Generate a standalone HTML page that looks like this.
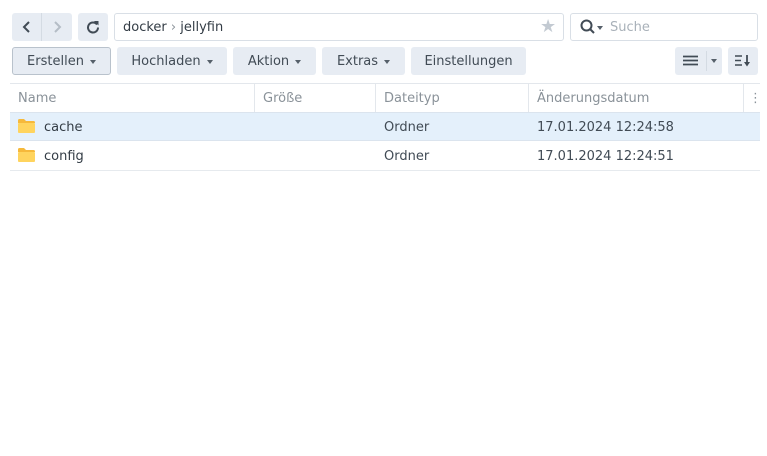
<!DOCTYPE html><html><head><style>
*{box-sizing:border-box;margin:0;padding:0}
body{width:767px;height:456px;background:#fff;font-family:"DejaVu Sans","Liberation Sans",sans-serif;font-size:13px;color:#414b55;position:relative;overflow:hidden}
.a{position:absolute}
.btn{position:absolute;top:47px;height:28px;background:#e7ecf3;border-radius:3px;line-height:29px;text-align:center;color:#414b55}
.car{display:inline-block;width:0;height:0;border-left:3.5px solid transparent;border-right:3.5px solid transparent;border-top:4px solid #56606a;vertical-align:middle;margin-left:6px}
.hd{position:absolute;top:85px;height:28px;line-height:28px;color:#8a9299}
.vl{position:absolute;top:84px;height:28px;width:1px;background:#e3e7ec}
.cell{position:absolute;line-height:28px}
</style></head><body>
<div class="a" style="left:12px;top:13px;width:60px;height:28px;background:#e7ecf3;border-radius:3px"></div>
<div class="a" style="left:41px;top:13px;width:1px;height:28px;background:#d4dbe3"></div>
<svg class="a" style="left:20px;top:19px" width="14" height="16"><path d="M9 3 L4 8 L9 13" stroke="#414b55" stroke-width="2" fill="none"/></svg>
<svg class="a" style="left:50px;top:19px" width="14" height="16"><path d="M5 3 L10 8 L5 13" stroke="#b5bdc6" stroke-width="2" fill="none"/></svg>
<div class="a" style="left:78px;top:13px;width:30px;height:28px;background:#e7ecf3;border-radius:3px"></div>
<svg class="a" style="left:86px;top:20px" width="14" height="14"><path d="M11 4.5 A5 5 0 1 0 12 7.5" stroke="#414b55" stroke-width="2" fill="none"/><path d="M8 1 L12.5 1 L12.5 5.5 Z" fill="#414b55"/></svg>
<div class="a" style="left:114px;top:13px;width:450px;height:28px;border:1px solid #d9dfe6;border-radius:3px"></div>
<div class="a" style="left:123px;top:14px;line-height:28px;color:#333c45">docker <span style="color:#8a9299">›</span> jellyfin</div>
<div class="a" style="left:540px;top:13px;line-height:28px;color:#c3cad2;font-size:18px">★</div>
<div class="a" style="left:570px;top:13px;width:188px;height:28px;border:1px solid #d9dfe6;border-radius:3px"></div>
<svg class="a" style="left:580px;top:19px" width="16" height="16"><circle cx="6.5" cy="6.5" r="5" stroke="#414b55" stroke-width="2" fill="none"/><path d="M10 10 L14 14" stroke="#414b55" stroke-width="2"/></svg>
<div class="a" style="left:597px;top:26px;border-left:3.5px solid transparent;border-right:3.5px solid transparent;border-top:4px solid #56606a"></div>
<div class="a" style="left:610px;top:14px;line-height:28px;color:#a9b1b9">Suche</div>
<div class="btn" style="left:12px;width:99px;border:1px solid #b9c2cc;line-height:27px">Erstellen<span class="car"></span></div>
<div class="btn" style="left:117px;width:110px">Hochladen<span class="car"></span></div>
<div class="btn" style="left:233px;width:83px">Aktion<span class="car"></span></div>
<div class="btn" style="left:322px;width:83px">Extras<span class="car"></span></div>
<div class="btn" style="left:411px;width:115px">Einstellungen</div>
<div class="btn" style="left:675px;width:47px"></div>
<div class="a" style="left:706px;top:51px;width:1px;height:20px;background:#d4dbe3"></div>
<svg class="a" style="left:683px;top:55px" width="16" height="12"><path d="M0 1.5H15M0 5.5H15M0 9.5H15" stroke="#414b55" stroke-width="1.8"/></svg>
<div class="a" style="left:711px;top:59px;border-left:3.5px solid transparent;border-right:3.5px solid transparent;border-top:4px solid #56606a"></div>
<div class="btn" style="left:728px;width:30px"></div>
<svg class="a" style="left:735px;top:54px" width="18" height="14"><path d="M0 2H7M0 6.5H6M0 11H7" stroke="#414b55" stroke-width="1.6"/><path d="M12 1V11" stroke="#414b55" stroke-width="1.8"/><path d="M9 8L12 12.5L15 8Z" fill="#414b55"/></svg>
<div class="a" style="left:10px;top:83px;width:750px;height:1px;background:#e3e7ec"></div>
<div class="hd" style="left:18px">Name</div>
<div class="vl" style="left:254px"></div><div class="hd" style="left:263px">Größe</div>
<div class="vl" style="left:375px"></div><div class="hd" style="left:384px">Dateityp</div>
<div class="vl" style="left:528px"></div><div class="hd" style="left:537px">Änderungsdatum</div>
<div class="vl" style="left:743px"></div><div class="hd" style="left:749px">⋮</div>
<div class="a" style="left:10px;top:112px;width:750px;height:29px;background:#e4f0fb;border-top:1px solid #dbe4ee;border-bottom:1px solid #dbe4ee"></div>
<div class="a" style="left:10px;top:170px;width:750px;height:1px;background:#e6eaee"></div>
<svg class="a" style="left:18px;top:119px" width="17" height="14"><path d="M0 1.5Q0 0 1.5 0H6L8 2H15.5Q17 2 17 3.5V4H0Z" fill="#f6b93b"/><rect x="0" y="4" width="17" height="10" rx="1" fill="#ffd45e"/></svg>
<svg class="a" style="left:18px;top:148px" width="17" height="14"><path d="M0 1.5Q0 0 1.5 0H6L8 2H15.5Q17 2 17 3.5V4H0Z" fill="#f6b93b"/><rect x="0" y="4" width="17" height="10" rx="1" fill="#ffd45e"/></svg>
<div class="cell" style="left:44px;top:114px;color:#333c45">cache</div>
<div class="cell" style="left:384px;top:114px">Ordner</div>
<div class="cell" style="left:537px;top:114px">17.01.2024 12:24:58</div>
<div class="cell" style="left:44px;top:143px;color:#333c45">config</div>
<div class="cell" style="left:384px;top:143px">Ordner</div>
<div class="cell" style="left:537px;top:143px">17.01.2024 12:24:51</div>
</body></html>
